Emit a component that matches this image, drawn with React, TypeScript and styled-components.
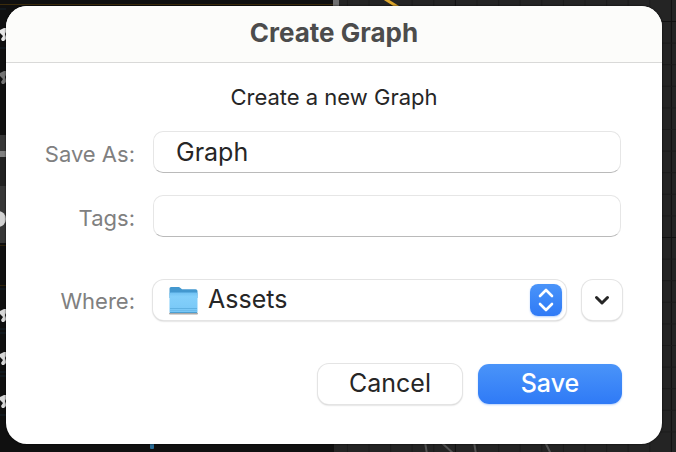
import React from "react";
import styled, { createGlobalStyle, css } from "styled-components";

const GlobalStyle = createGlobalStyle`
  *, *::before, *::after { box-sizing: border-box; }
  body {
    margin: 0;
    background: #111111;
    font-family: Inter, "Liberation Sans", sans-serif;
    color: #262626;
  }
`;

const Screen = styled.main`
  position: relative;
  display: flex;
  min-height: 100vh;
  padding: 6px 14px 8px 6px;
  overflow: hidden;
`;

const Canvas = styled.svg`
  position: absolute;
  inset: 0;
  width: 100%;
  height: 100%;
`;

const Dialog = styled.section`
  position: relative;
  flex: 1;
  min-width: 0;
  border-radius: 21px;
  background: #ffffff;
  overflow: hidden;
  box-shadow: 0 0 2px #000000;
`;

const TitleBar = styled.header`
  padding: 11px 0 13px;
  border-bottom: 1px solid #d9d9d8;
  background: #fcfcfa;
  text-align: center;
`;

const Title = styled.h1`
  margin: 0;
  font-size: 26px;
  line-height: 32px;
  font-weight: 700;
  color: #4c4c4c;
`;

const Form = styled.form`
  padding: 20px 40px 40px 0;
`;

const Prompt = styled.p`
  margin: 0 0 20px 40px;
  font-size: 22px;
  line-height: 28px;
  text-align: center;
`;

const Label = styled.label`
  padding-top: 4px;
  font-size: 22px;
  line-height: 28px;
  text-align: right;
  color: #808080;
`;

const Row = styled.div`
  display: grid;
  grid-template-columns: 129px minmax(0, 1fr);
  align-items: center;
  column-gap: 18px;
`;

const Fields = styled(Row)`
  row-gap: 22px;
  padding-right: 1px;
`;

const WhereRow = styled(Row)`
  margin-top: 43px;

  ${Label} {
    padding-top: 2px;
  }
`;

const TextField = styled.input`
  width: 100%;
  height: 42px;
  padding: 0 22px;
  border: 1px solid #e6e6e6;
  border-bottom-color: #bababa;
  border-radius: 10px;
  outline: none;
  background: #ffffff;
  font: inherit;
  font-size: 25px;
  color: #262626;
`;

const raised = css`
  height: 40px;
  border: 0;
  border-radius: 11px;
  background: #ffffff;
  box-shadow: 0 0 0 1px #e4e4e4, 0 1px 2px rgba(0, 0, 0, 0.32);
`;

const blue = css`
  background: linear-gradient(#4a94f9, #2f7af6);
  box-shadow: 0 1px 2px rgba(47, 122, 246, 0.35);
`;

const Location = styled.div`
  display: flex;
  gap: 16px;
`;

const PopUp = styled.div`
  ${raised}
  flex: 1;
  display: grid;
  grid-template-columns: 16px 29px minmax(0, 1fr) 32px 4px;
  align-items: center;
`;

const FolderIcon = styled.svg`
  grid-area: 1 / 2;
  pointer-events: none;
  z-index: 1;
`;

const Choice = styled.select`
  grid-area: 1 / 1 / 2 / 6;
  width: 100%;
  height: 40px;
  padding: 0 40px 2px 55px;
  border: 0;
  border-radius: 11px;
  outline: none;
  appearance: none;
  background: transparent;
  font: inherit;
  font-size: 25px;
  color: #262626;
`;

const Stepper = styled.span`
  ${blue}
  grid-area: 1 / 4;
  display: flex;
  align-items: center;
  justify-content: center;
  height: 32px;
  border-radius: 8px;
  pointer-events: none;
  z-index: 1;
`;

const ExpandButton = styled.button`
  ${raised}
  display: flex;
  align-items: center;
  justify-content: center;
  width: 40px;
  padding: 0;
  color: #262626;
`;

const Actions = styled.footer`
  display: flex;
  justify-content: flex-end;
  gap: 16px;
  margin-top: 44px;
`;

const ActionButton = styled.button<{ $primary?: boolean }>`
  ${raised}
  width: 144px;
  padding: 0 0 2px;
  font: inherit;
  font-size: 25px;
  line-height: 38px;
  color: #262626;
  ${(p) =>
    p.$primary &&
    css`
      ${blue}
      font-weight: 500;
      color: #ffffff;
    `}
`;

const CELL = 21.6;
const range = (n: number) => Array.from({ length: n }, (_, i) => i);
const stars = [
  { y: 34, fill: "#e6e6e6" },
  { y: 77, fill: "#747474" },
  { y: 315, fill: "#d8d8d8" },
  { y: 358, fill: "#d8d8d8" },
  { y: 401, fill: "#d8d8d8" },
];

function GraphCanvas() {
  return (
    <Canvas aria-hidden="true">
      <rect width="100%" height="100%" fill="#242424" />
      {range(24).map((i) => (
        <path key={`v${i}`} d={`M${347.4 + i * CELL} 0V2000`} stroke={i % 10 === 5 ? "#111" : "#1c1c1c"} />
      ))}
      {range(24).map((i) => (
        <path key={`h${i}`} d={`M334 ${21.5 + i * CELL}H2000`} stroke={i % 10 === 0 ? "#111" : "#1c1c1c"} />
      ))}
      <rect width="334" height="2000" fill="#101010" />
      <path d="M0 4.5H333" stroke="#3c2c0c" />
      <path d="M333 0h6v6h-6z" fill="#707070" />
      <path d="M385 -1L401 9" stroke="#dba52c" strokeWidth="3" />
      <path d="M0 135h6v108H0z" fill="#373737" />
      <path d="M0 157h6v29H0z" fill="#222" />
      <path d="M0 151h6v6H0z" fill="#808080" />
      <circle cx="-2" cy="219" r="8" fill="#d2d2d2" />
      <path d="M0 245.500H6M0 285.500H6" stroke="#30240c" />
      <path d="M0 9H6M0 48H6M0 289H6M0 329H6M0 333H6M0 372H6M0 376H6M0 415H6" stroke="#14232c" />
      {stars.map(({ y, fill }) => (
        <path
          key={y}
          transform={`translate(0 ${y})`}
          d="M0 -4L4 -6H6V-2L5 0L6 3V5L4 7H2L1 5L3 2L0 -1Z"
          fill={fill}
        />
      ))}
      <rect x="150" y="440" width="4" height="9" rx="1" fill="#286a94" />
      <path
        d="M425 442L427 454M441 442L456 456M474 442L476 454M545 442L551 454"
        stroke="#525252"
        strokeWidth="2"
        fill="none"
      />
    </Canvas>
  );
}

function Folder() {
  return (
    <FolderIcon width="29" height="29" viewBox="0 0 29 29" aria-hidden="true">
      <defs>
        <linearGradient id="folderFront" x1="0" y1="0" x2="0" y2="1">
          <stop offset="0" stopColor="#70c1f3" />
          <stop offset="0.2" stopColor="#84d0fb" />
          <stop offset="1" stopColor="#76c6f6" />
        </linearGradient>
      </defs>
      <path d="M1 27.500H28" stroke="#a8a8a8" strokeWidth="2" strokeLinecap="round" />
      <path d="M0.500 2.500Q0.500 1 2 1H9.500Q10.500 1 11.500 2L13 3.200H26.500Q28.500 3.200 28.500 5V12H0.500Z" fill="#4398cf" />
      <path d="M0.500 7.500Q0.500 6.500 2 6.500H27Q28.500 6.500 28.500 7.500V25.500Q28.500 27 27 27H2Q0.500 27 0.500 25.500Z" fill="url(#folderFront)" />
      <path d="M1 22.500H28" stroke="#5fb1e2" strokeWidth="1" />
      <path d="M1 24.500H28" stroke="#6dbcec" strokeWidth="1" />
      <path d="M1 26.500H28" stroke="#4c9fd2" strokeWidth="1" />
    </FolderIcon>
  );
}

export default function App() {
  return (
    <>
      <GlobalStyle />
      <Screen>
        <GraphCanvas />
        <Dialog role="dialog" aria-labelledby="dialog-title">
          <TitleBar>
            <Title id="dialog-title">Create Graph</Title>
          </TitleBar>
          <Form onSubmit={(e) => e.preventDefault()}>
            <Prompt>Create a new Graph</Prompt>
            <Fields>
              <Label htmlFor="save-as">Save As:</Label>
              <TextField id="save-as" defaultValue="Graph" spellCheck={false} />
              <Label htmlFor="tags">Tags:</Label>
              <TextField id="tags" />
            </Fields>
            <WhereRow>
              <Label htmlFor="where">Where:</Label>
              <Location>
                <PopUp>
                  <Folder />
                  <Choice id="where" defaultValue="Assets">
                    <option>Assets</option>
                  </Choice>
                  <Stepper>
                    <svg width="18" height="26" viewBox="0 0 18 26" fill="none" stroke="#fff" strokeWidth="2.600" strokeLinecap="round" strokeLinejoin="round" aria-hidden="true">
                      <path d="M3 9L9 3L15 9M3 17L9 23L15 17" />
                    </svg>
                  </Stepper>
                </PopUp>
                <ExpandButton type="button" aria-label="Show more options">
                  <svg width="18" height="12" viewBox="0 0 18 12" fill="none" stroke="currentColor" strokeWidth="3" strokeLinecap="round" strokeLinejoin="round" aria-hidden="true">
                    <path d="M3.500 3.500L9 9L14.500 3.500" />
                  </svg>
                </ExpandButton>
              </Location>
            </WhereRow>
            <Actions>
              <ActionButton type="button">Cancel</ActionButton>
              <ActionButton type="submit" $primary>
                Save
              </ActionButton>
            </Actions>
          </Form>
        </Dialog>
      </Screen>
    </>
  );
}
